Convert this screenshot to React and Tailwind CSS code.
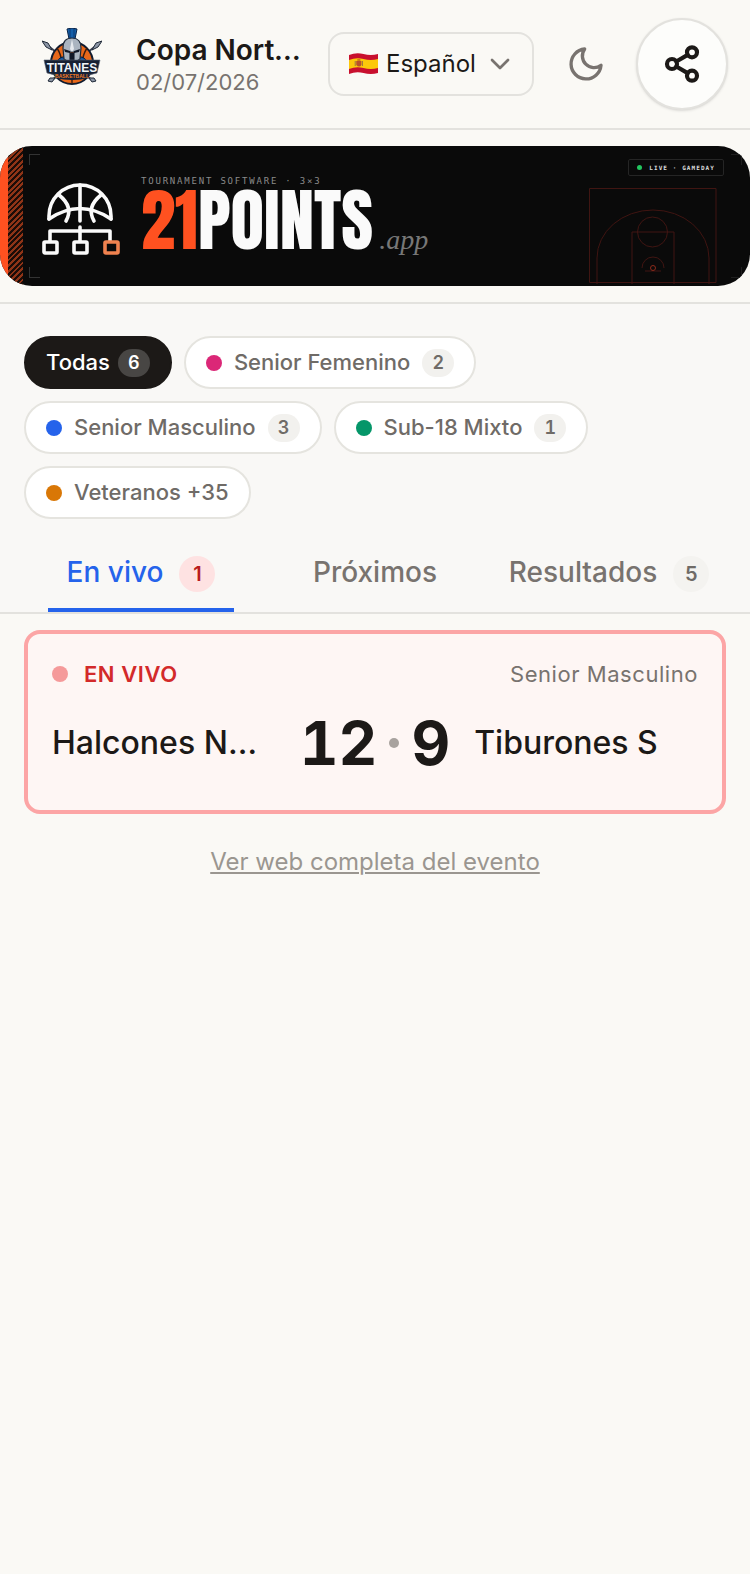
import React, { useState } from 'react';
import { ChevronDown, Share2 } from 'lucide-react';

const categories = [
  { id: 'all', name: 'Todas', count: 6 },
  { id: 'sf', name: 'Senior Femenino', count: 2, dot: 'bg-[#db2777]' },
  { id: 'sm', name: 'Senior Masculino', count: 3, dot: 'bg-[#2563eb]' },
  { id: 'u18', name: 'Sub-18 Mixto', count: 1, dot: 'bg-[#059669]' },
  { id: 'vet', name: 'Veteranos +35', dot: 'bg-[#d97706]' },
];

const tabs = [
  { id: 'live', name: 'En vivo', count: 1 },
  { id: 'next', name: 'Próximos' },
  { id: 'results', name: 'Resultados', count: 5 },
];

const TeamLogo = () => (
  <svg viewBox="0 0 60 58" className="w-[60px] h-[58px]" role="img" aria-label="Titanes Basketball">
    {/* Spears */}
    <g stroke="#3b4252" strokeWidth="2" strokeLinecap="round">
      <path d="M5 17 50 52M55 17 10 52" />
    </g>
    <path d="m0 13 6 2 4 7-6-3Z M60 13l-6 2-4 7 6-3Z" fill="#8b95a5" stroke="#1f2937" />
    <path d="m8 50 5 0-3 4-4-1ZM52 50l-5 0 3 4 4-1Z" fill="#8b95a5" stroke="#1f2937" />
    {/* Ball */}
    <circle cx="30" cy="35" r="21" fill="#e8681a" stroke="#101c30" strokeWidth="2" />
    <path d="M30 14v42M10 35h40M15 20q9 14 0 30M45 20q-9 14 0 30" stroke="#3b1d10" strokeWidth="1.4" fill="none" />
    {/* Shoulders and crest */}
    <path d="M14 35q4-8 12-6l4 6 4-6q8-2 12 6Z" fill="#1457a0" stroke="#0b1a33" />
    <path d="M25 1q5-2 10 0l-2 10h-6Z" fill="#155fa8" stroke="#0b2447" />
    <path d="M28 1v9M32 1v9" stroke="#0b3b75" />
    {/* Helmet */}
    <path d="M21 20q0-10 9-10t9 10l-1 11-6 4V24h-4v11l-6-4Z" fill="#aab4c0" stroke="#1f2937" strokeWidth="1.2" />
    <path d="m30 11 2 10-2 3-2-3Z" fill="#e5e9ee" />
    <path d="m22 21 6 2v2l-5-1ZM38 21l-6 2v2l5-1Z" fill="#111827" />
    <path d="M28 25h4v10h-4Z" fill="#111827" />
    {/* Name plate */}
    <path d="M2 32h56l-3 13q-25 8-50 0Z" fill="#172033" stroke="#5b6677" strokeWidth=".6" />
    <path d="M13 45h34v5q-17 4-34 0Z" fill="#14223b" />
    <text x="30" y="43.500" textAnchor="middle" fontSize="12" className="font-['Liberation_Sans'] font-bold" fill="#f1f5f9">TITANES</text>
    <text x="30" y="50" textAnchor="middle" fontSize="5" className="font-['Liberation_Sans'] font-bold" fill="#ee7a24">BASKETBALL</text>
  </svg>
);

const SpainFlag = () => (
  <svg viewBox="0 0 28 22" className="w-[29px] h-[22px]" preserveAspectRatio="none" aria-hidden="true">
    <path d="M0 2q7-3 14-1t14 0v19q-7 2-14 0t-14 1Z" fill="#c8102e" />
    <path d="M0 7q7-3 14-1t14 0v9q-7 2-14 0t-14 1Z" fill="#fcc80a" />
    <path d="M7 8h5v4q-2 3-5 0Z" fill="#b8502b" />
    <path d="M6 8v5M13 8v5" stroke="#a2783f" />
    <path d="M8 7h3" stroke="#a33b1c" />
  </svg>
);

const MoonIcon = () => (
  <svg viewBox="0 0 24 24" className="size-10" fill="none" stroke="currentColor" strokeWidth="2" strokeLinecap="round" strokeLinejoin="round" aria-hidden="true">
    <path d="M21 12.790A9 9 0 1 1 11.210 3 7 7 0 0 0 21 12.790z" />
  </svg>
);

const BracketBall = () => (
  <svg viewBox="0 0 78 72" className="w-[78px] h-[72px]" fill="none" stroke="#fafafa" strokeWidth="3.6" strokeLinecap="round" aria-hidden="true">
    <path d="M7 36V33a31 31 0 0 1 62 0v3" />
    <path d="M38 2v36" />
    <path d="M7 36q31-21 62 0" />
    <path d="M17 12q15 12 7 26M59 12q-15 12-7 26" />
    <path d="M38 44v14M8 58V48h60v10" strokeLinejoin="round" />
    <rect x="2" y="59" width="13" height="11" rx="1" />
    <rect x="32" y="59" width="13" height="11" rx="1" />
    <rect x="63" y="59" width="13" height="11" rx="1" stroke="#f0824f" />
  </svg>
);

const Court = () => (
  <svg viewBox="0 0 128 96" className="w-32 h-24" fill="none" stroke="#401512" aria-hidden="true">
    <path d="M.5 94.500V.5h126.500v94Z" />
    <path d="M8 96V70A56 48 0 0 1 120 70v26" />
    <path d="M43 96V44h42v52" />
    <circle cx="63.500" cy="44" r="15" />
    <path d="M53 80a11 11 0 0 1 22 0M56 83h16" />
    <circle cx="64" cy="80" r="2.500" stroke="#8a2a1a" />
  </svg>
);

const Banner = () => (
  <a href="#sponsor" className="relative flex h-[140px] overflow-hidden rounded-[32px] bg-[#0a0a0a]">
    <span className="w-2 bg-[#ff5120]" />
    <span className="w-[15px] bg-[repeating-linear-gradient(135deg,#8f3417_0_2px,#1c0d08_2px_4px)]" />
    <span className="ml-[19px] mt-[37px]">
      <BracketBall />
    </span>
    <span className="ml-[21px] mt-[30px] flex flex-col">
      <span className="font-['DejaVu_Sans_Mono',monospace] text-[9px] leading-[10px] tracking-[0.2em] text-[#8a8a8a]">
        TOURNAMENT SOFTWARE · 3×3
      </span>
      <span className="flex items-baseline">
        <span className="font-['Anton','Roboto_Condensed','Liberation_Sans_Narrow','Roboto',sans-serif] text-[69px] leading-[68px] text-[#fafafa]">
          <span className="text-[#ff5120]">21</span>POINTS
        </span>
        <span className="ml-[6px] font-['Liberation_Serif',serif] text-[28px] italic text-[#777]">.app</span>
      </span>
    </span>
    <span className="ml-auto mr-[26px] mt-[13px] flex flex-col items-end gap-3">
      <span className="flex h-[17px] items-center gap-[7px] rounded-xs border border-[#252525] px-2">
        <span className="size-[5px] rounded-full bg-[#22c55e]" />
        <span className="font-['DejaVu_Sans_Mono',monospace] text-[6px] leading-none font-bold tracking-[0.18em] text-[#ddd]">
          LIVE · GAMEDAY
        </span>
      </span>
      <span className="mr-[7px]">
        <Court />
      </span>
    </span>
    <span className="absolute left-[29px] top-2 size-[11px] border-l border-t border-[#333]" />
    <span className="absolute bottom-2 left-[29px] size-[11px] border-b border-l border-[#333]" />
    <span className="absolute right-2 top-2 size-[11px] border-r border-t border-[#1f1f1f]" />
    <span className="absolute bottom-2 right-2 size-[11px] border-b border-r border-[#1f1f1f]" />
  </a>
);

const App = () => {
  const [category, setCategory] = useState('all');
  const [tab, setTab] = useState('live');

  return (
    <div className="min-h-screen bg-[#faf9f5] font-['Inter',sans-serif] text-[#1c1917]">
      <header className="flex h-[130px] items-center border-b-2 border-[#e3e2de] pl-6 pr-[22px]">
        <div className="flex w-24 shrink-0 justify-center pb-[14px]">
          <TeamLogo />
        </div>
        <div className="ml-4 min-w-0 flex-1">
          <h1 className="truncate text-[28px] leading-9 font-semibold">Copa Norte 3x3</h1>
          <p className="text-[22px] leading-7 text-[#78736f]">02/07/2026</p>
        </div>
        <div className="relative ml-6 shrink-0">
          <select
            aria-label="Idioma"
            className="h-16 w-[206px] appearance-none rounded-2xl border-2 border-[#e3e2de] bg-transparent pl-14 text-2xl"
          >
            <option>Español</option>
            <option>English</option>
          </select>
          <span className="pointer-events-none absolute inset-y-0 left-[21px] flex items-center">
            <SpainFlag />
          </span>
          <ChevronDown size={32} className="pointer-events-none absolute right-[18px] top-4 text-[#78736f]" />
        </div>
        <button type="button" aria-label="Modo oscuro" className="ml-8 shrink-0 text-[#78736f]">
          <MoonIcon />
        </button>
        <button
          type="button"
          aria-label="Compartir"
          className="ml-[30px] flex size-[92px] shrink-0 items-center justify-center rounded-full border-2 border-[#e3e2de] bg-[#fdfdfb] shadow-sm"
        >
          <Share2 size={40} strokeWidth={2.5} />
        </button>
      </header>

      <div className="border-b-2 border-[#e3e2de] py-4">
        <Banner />
      </div>

      <div className="border-b-2 border-[#e3e2de] bg-[#f9f8f6] px-6 pt-8">
        <div className="flex flex-wrap gap-3">
          {categories.map((cat) => (
            <button
              key={cat.id}
              type="button"
              onClick={() => setCategory(cat.id)}
              className={`flex h-[53px] items-center rounded-full border-2 px-5 text-[22px] font-medium ${
                category === cat.id
                  ? 'gap-2 border-[#1c1917] bg-[#1c1917] text-white'
                  : 'gap-3 border-[#e5e4df] bg-white text-[#6f6b67]'
              }`}
            >
              {cat.dot && <span className={`size-4 rounded-full ${cat.dot}`} />}
              {cat.name}
              {cat.count && (
                <span
                  className={`flex h-7 w-8 items-center justify-center rounded-full text-lg font-semibold tabular-nums ${
                    category === cat.id ? 'bg-[#484644]' : 'bg-[#f2f1ee]'
                  }`}
                >
                  {cat.count}
                </span>
              )}
            </button>
          ))}
        </div>

        <div role="tablist" className="mt-4 grid grid-cols-3">
          {tabs.map((t) => (
            <button
              key={t.id}
              type="button"
              role="tab"
              aria-selected={tab === t.id}
              onClick={() => setTab(t.id)}
              className={`relative flex h-[77px] items-center justify-center gap-4 text-[28px] font-medium ${
                tab === t.id ? 'text-[#2563eb]' : 'text-[#78736f]'
              }`}
            >
              <span className="pb-1">{t.name}</span>
              {t.count && (
                <span
                  className={`flex size-9 items-center justify-center rounded-full text-xl font-semibold ${
                    t.id === 'live' ? 'bg-[#fee2e2] text-[#b91c1c]' : 'bg-[#f4f3f0] text-[#6f6b67]'
                  }`}
                >
                  {t.count}
                </span>
              )}
              {tab === t.id && <span className="absolute inset-x-6 bottom-0 h-1 bg-[#2563eb]" />}
            </button>
          ))}
        </div>
      </div>

      <main className="px-6 pt-4">
        <article className="rounded-2xl border-4 border-[#fca5a5] bg-[#fef6f4] px-6 pb-[30px] pt-6">
          <div className="flex items-center justify-between text-[22px] leading-8">
            <span className="flex items-center gap-4 font-semibold tracking-wide text-[#d32a2a]">
              <span className="size-4 rounded-full bg-[#f59a9a]" />
              EN VIVO
            </span>
            <span className="tracking-wide text-[#78736f]">Senior Masculino</span>
          </div>
          <div className="mt-4 grid grid-cols-[1fr_auto_1fr] items-center gap-6 text-[32px] font-medium">
            <span className="truncate">Halcones Norte</span>
            <span className="flex items-center gap-3 text-[60px] leading-[74px] font-bold tabular-nums">
              12
              <span className="size-[10px] rounded-full bg-[#a8a29e]" />
              9
            </span>
            <span className="truncate">Tiburones S</span>
          </div>
        </article>

        <p className="mt-8 text-center">
          <a href="#evento" className="text-2xl text-[#9a9690] underline underline-offset-2">
            Ver web completa del evento
          </a>
        </p>
      </main>
    </div>
  );
};

export default App;
